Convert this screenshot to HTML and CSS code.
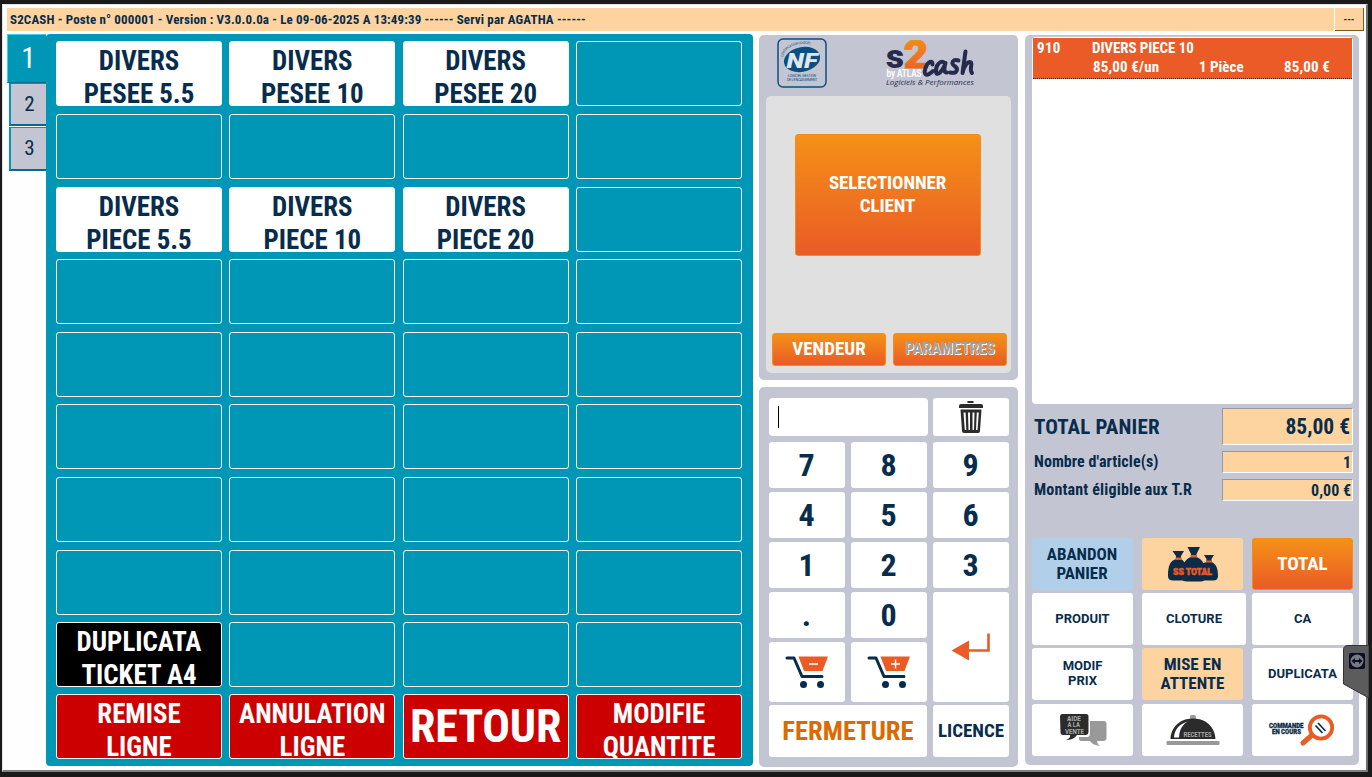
FILE: index.html
```
<!DOCTYPE html>
<html lang="fr">
<head>
<meta charset="utf-8">
<title>S2CASH</title>
<link rel="stylesheet" href="styles.css">
</head>
<body>
<div class="window">
  <header class="titlebar">
    <div class="title">S2CASH - Poste n° 000001 - Version : V3.0.0.0a - Le 09-06-2025 A 13:49:39 ------ Servi par AGATHA ------</div>
    <button class="mini">---</button>
  </header>
  <main class="main">
    <nav class="tabs">
      <div class="tab active">1</div>
      <div class="tab">2</div>
      <div class="tab">3</div>
    </nav>
    <section class="board">
      <div class="cell white">DIVERS<br>PESEE 5.5</div><div class="cell white">DIVERS<br>PESEE 10</div><div class="cell white">DIVERS<br>PESEE 20</div><div class="cell"></div>
      <div class="cell"></div><div class="cell"></div><div class="cell"></div><div class="cell"></div>
      <div class="cell white">DIVERS<br>PIECE 5.5</div><div class="cell white">DIVERS<br>PIECE 10</div><div class="cell white">DIVERS<br>PIECE 20</div><div class="cell"></div>
      <div class="cell"></div><div class="cell"></div><div class="cell"></div><div class="cell"></div>
      <div class="cell"></div><div class="cell"></div><div class="cell"></div><div class="cell"></div>
      <div class="cell"></div><div class="cell"></div><div class="cell"></div><div class="cell"></div>
      <div class="cell"></div><div class="cell"></div><div class="cell"></div><div class="cell"></div>
      <div class="cell"></div><div class="cell"></div><div class="cell"></div><div class="cell"></div>
      <div class="cell black">DUPLICATA<br>TICKET A4</div><div class="cell"></div><div class="cell"></div><div class="cell"></div>
      <div class="cell red">REMISE<br>LIGNE</div><div class="cell red">ANNULATION<br>LIGNE</div><div class="cell red big">RETOUR</div><div class="cell red">MODIFIE<br>QUANTITE</div>
    </section>
    <div class="middle">
      <section class="client-panel">
        <div class="logos">
          <svg class="nf" viewBox="0 0 50 50" width="50" height="50">
            <rect x="1" y="1" width="48" height="48" rx="5" fill="none" stroke="#0b4f80" stroke-width="1.5"/>
            <ellipse cx="25" cy="21.500" rx="18.300" ry="12.300" fill="#0b4f80" transform="rotate(-12 25 21.500)"/>
            <text x="9.500" y="30" class="nf-text" textLength="31" lengthAdjust="spacingAndGlyphs">NF</text>
            <path id="arc" d="M6 19C8 8 24 3 38 7.500" fill="none"/>
            <text class="nf-tiny"><textPath href="#arc" textLength="34">CERTIFICATION LOGICIEL</textPath></text>
            <text x="11" y="39" class="nf-tiny" textLength="28">LOGICIEL GESTION</text>
            <text x="10" y="43" class="nf-tiny" textLength="30">DE L'ENCAISSEMENT</text>
          </svg>
          <svg class="brand" viewBox="0 0 92 50" width="92" height="50">
            <defs><linearGradient id="two" x1="0" y1="0" x2="0" y2="1"><stop offset="0" stop-color="#f49518"/><stop offset="1" stop-color="#ea5a26"/></linearGradient></defs>
            <text x="1" y="27.500" class="b-s" textLength="18" lengthAdjust="spacingAndGlyphs">s</text>
            <text x="18.500" y="27.500" class="b-2" textLength="25" lengthAdjust="spacingAndGlyphs" fill="url(#two)">2</text>
            <text x="1.500" y="37" class="b-by" textLength="35" lengthAdjust="spacingAndGlyphs">by ATLAS</text>
            <g fill="none" stroke="#262a4c" stroke-width="4" stroke-linecap="round" stroke-linejoin="round">
              <path d="M47.500 24.500C48 20 43 21 40.500 28C38 36 42 36.500 48 31"/>
              <path d="M60 23C55 19 50.500 26 51 32C52 37 58 31 60.500 23C58.500 29 59 33 62 32.500"/>
              <path d="M73.500 20.500C68 19 65 23 69.500 26C74 29 72 34 65 32.500"/>
              <path d="M80.500 11.500L77.500 33C79 26 83 20.500 86 22.500C87.500 25 84 29 87 33"/>
            </g>
            <text x="1" y="44.500" class="b-tag" textLength="88" lengthAdjust="spacingAndGlyphs">Logiciels &amp; Performances</text>
          </svg>
        </div>
        <div class="client-box">
          <button class="orange select">SELECTIONNER<br>CLIENT</button>
          <div class="pair">
            <button class="orange">VENDEUR</button>
            <button class="orange off">PARAMETRES</button>
          </div>
        </div>
      </section>
      <section class="keypad">
        <div class="input"><span class="caret"></span></div>
        <button class="key bin"><svg width="26" height="34" viewBox="0 0 26 34" fill="#2b2b2b"><rect x="9.500" y="1" width="6" height="2"/><path d="M1 6Q1 4 3 4H23Q25 4 25 6V8H1Z"/><path fill-rule="evenodd" d="M2.500 9.500H23.500L22 31Q22 33 20 33H6Q4 33 4 31ZM5.500 12.500L6.800 30H8.300L7.600 12.500ZM10 12.500L10.500 30H12V12.500ZM14.500 12.500V30H16L16.500 12.500ZM18.800 12.500L18 30H19.500L20.800 12.500Z"/></svg></button>
        <button class="key">7</button><button class="key">8</button><button class="key">9</button>
        <button class="key">4</button><button class="key">5</button><button class="key">6</button>
        <button class="key">1</button><button class="key">2</button><button class="key">3</button>
        <button class="key">.</button><button class="key">0</button>
        <button class="key enter"><svg width="40" height="30" viewBox="0 0 40 30"><path d="M17 18.500H37.500V1.500" fill="none" stroke="#ea5b26" stroke-width="2.600"/><path d="M0.500 18.500L18 8.500V28.500Z" fill="#ea5b26"/></svg></button>
        <button class="key cart"><svg width="44" height="34" viewBox="0 0 44 34"><path d="M2 3H9L17 21.500H37" fill="none" stroke="#082c4b" stroke-width="3" stroke-linecap="round" stroke-linejoin="round"/><path d="M13.500 1.500H43L37.500 16H19Z" fill="#ea5b26"/><circle cx="18.500" cy="29.500" r="3.500" fill="#082c4b"/><circle cx="35.500" cy="29.500" r="3.500" fill="#082c4b"/><path d="M24 9H33" stroke="#fff" stroke-width="1.500"/></svg></button>
        <button class="key cart"><svg width="44" height="34" viewBox="0 0 44 34"><path d="M2 3H9L17 21.500H37" fill="none" stroke="#082c4b" stroke-width="3" stroke-linecap="round" stroke-linejoin="round"/><path d="M13.500 1.500H43L37.500 16H19Z" fill="#ea5b26"/><circle cx="18.500" cy="29.500" r="3.500" fill="#082c4b"/><circle cx="35.500" cy="29.500" r="3.500" fill="#082c4b"/><path d="M24 9H33M28.500 4.500V13.500" stroke="#fff" stroke-width="1.500"/></svg></button>
        <button class="key close">FERMETURE</button>
        <button class="key licence">LICENCE</button>
      </section>
    </div>
    <section class="ticket">
      <div class="list">
        <div class="line">
          <div class="l1"><span class="code">910</span><span>DIVERS PIECE 10</span></div>
          <div class="l2"><span class="unit">85,00 €/un</span><span class="qty">1 Pièce</span><span class="amount">85,00 €</span></div>
        </div>
      </div>
      <div class="totals">
        <span class="tl grand">TOTAL PANIER</span><span class="field grand">85,00 €</span>
        <span class="tl">Nombre d'article(s)</span><span class="field">1</span>
        <span class="tl tr">Montant éligible aux T.R</span><span class="field">0,00 €</span>
      </div>
      <div class="actions">
        <button class="act blue">ABANDON<br>PANIER</button>
        <button class="act peach"><svg width="52" height="36" viewBox="0 0 52 36">
          <path d="M5.500 5H17L14 10V13C20 16 20 26 19 34.500H6Q1 34.500 1 30C1 20 3 15 9 13V10ZM37 9H47L44.500 13V16C50 18 51 24 51 30Q51 34.500 46 34.500H34V18L39.500 16V13Z" fill="#0c2b49"/>
          <path d="M20.500 1H33L29.500 8V11C35 13 38 18 38 24V33Q37 35.500 34 35.500H20Q16 35.500 15 33V22C16 17 19 13 24 11V8Z" fill="#0c2b49"/>
          <path d="M23.500 9H30V11.500H23.500ZM8.500 11.500H14.500V14H8.500ZM39 14.500H45V16.500H39Z" fill="#ea5b26"/>
          <text x="6" y="29" class="ss" textLength="39" lengthAdjust="spacingAndGlyphs">SS TOTAL</text></svg></button>
        <button class="act orange total">TOTAL</button>
        <button class="act small">PRODUIT</button>
        <button class="act small wide">CLOTURE</button>
        <button class="act small">CA</button>
        <button class="act small">MODIF<br>PRIX</button>
        <button class="act peach">MISE EN<br>ATTENTE</button>
        <button class="act small">DUPLICATA</button>
        <button class="act"><svg width="48" height="34" viewBox="0 0 48 34">
          <path d="M31 8H45Q47.500 8 47.500 11V25Q47.500 28 44 28H38Q38 31 41 33Q33 32 31 28H22Q20 28 20 26V24H29Q31 23 31 20Z" fill="#999"/>
          <path d="M3 1H27Q29.500 1 29.500 3.500V19Q29.500 21.500 27 22H18Q15 27 7 27Q12 25 11 22H4Q1.500 22 1.500 19L1 3.500Q1 1 3 1Z" fill="#2b2b2b"/>
          <text class="aide" x="8" y="8" textLength="14" lengthAdjust="spacingAndGlyphs">AIDE</text><text class="aide" x="8.500" y="14" textLength="12.500" lengthAdjust="spacingAndGlyphs">À LA</text><text class="aide" x="6" y="20.500" textLength="19" lengthAdjust="spacingAndGlyphs">VENTE</text></svg></button>
        <button class="act"><svg width="54" height="32" viewBox="0 0 54 32">
          <rect x="24" y="1" width="6" height="4" rx="2" fill="#999"/><rect x="0.500" y="27" width="53" height="4" rx="1" fill="#999"/>
          <path fill-rule="evenodd" d="M4.500 25C5 13 14 4.500 27 4.500S49 13 49.500 25ZM8 23.500H13C13.500 15 17 10 22 7.500C14 9.500 8.500 15 8 23.500Z" fill="#2b2b2b"/>
          <text class="aide" x="17.500" y="23" textLength="28" lengthAdjust="spacingAndGlyphs">RECETTES</text></svg></button>
        <button class="act"><svg class="lens" width="68" height="34" viewBox="0 0 68 34">
          <path d="M43 23L35 30" stroke="#ea5b26" stroke-width="5" stroke-linecap="round"/><circle cx="53" cy="14.500" r="11.200" fill="none" stroke="#ea5b26" stroke-width="3.800"/>
          <path d="M50 10L57.500 18M47.500 12.500L54.500 20" stroke="#0c2b49" stroke-width="1.700"/>
          <text class="cmd" x="1" y="15" textLength="34.500" lengthAdjust="spacingAndGlyphs">COMMANDE</text><text class="cmd" x="4" y="21" textLength="29" lengthAdjust="spacingAndGlyphs">EN COURS</text></svg></button>
      </div>
    </section>
  </main>
</div>
<svg class="remote" width="26" height="54" viewBox="0 0 26 54"><path d="M0.500 5Q0.500 0.500 5 0.500H26V53L0.500 39Z" fill="#5c5c5c" stroke="#333"/><rect x="6" y="8" width="16" height="16" rx="2" fill="#0b0c2a"/><circle cx="14" cy="16" r="6.500" fill="#777b80"/><path d="M8.500 16L12 13V15H16V13L19.500 16L16 19V17H12V19Z" fill="#0b0c2a"/></svg>
</body>
</html>
```
FILE: styles.css
```
* { box-sizing: border-box; }
body {
  margin: 0; width: 1372px; height: 777px; overflow: hidden; position: relative;
  background: #1a1a1a; color: #082c4b; padding: 4px 4px 5px 2px;
  font-family: "Roboto Condensed", Roboto, sans-serif; font-stretch: 75%; font-weight: 700;
}
button { border: 0; padding: 0; margin: 0; font: inherit; color: inherit; font-stretch: inherit; }
svg { display: block; }
.window {
  height: 768px; background: #fefefe; padding: 2px 2px 0 4px;
  border: 1px solid #e3e3e3; border-right: 2px solid #6e6e6e; border-bottom: 2px solid #808080;
}
.titlebar { display: flex; gap: 1px; height: 24px; padding-top: 1px; }
.title { width: 1327px; height: 23px; background: #fdd4a0; font-size: 13px; line-height: 23px; padding-left: 3px; letter-spacing: .145px; white-space: pre; }
.mini { width: 29px; background: #fdd4a0; border-right: 1px solid #80571c; border-bottom: 1px solid #80571c; font-size: 10px; }
.main { display: flex; padding-top: 3px; }
.tabs { width: 39px; display: flex; flex-direction: column; align-items: flex-end; font-weight: 400; }
.tab { width: 37px; height: 43px; margin-bottom: 1px; background: #c3c5d2; border: 1px solid #0097b7; border-left: 2px solid #0097b7; border-bottom: 2px solid #056a8c; border-right: 0; font-size: 21px; line-height: 41px; padding-left: 2px; text-align: center; }
.tab:last-child { height: 44px; }
.tab.active { width: 39px; height: 49px; margin: 0; background: #0097b7; color: #fff; font-size: 29px; line-height: 46px; padding-left: 3px; border-top-color: #3ad0ea; border-left: 1px solid #3ad0ea; border-bottom: 1px solid #056a8c; }
.board {
  width: 707px; height: 732px; background: #0097b7; border-radius: 4px; padding: 7px 11px 7px 10px;
  display: grid; grid-template-columns: repeat(4, 166px); grid-template-rows: 73px 73px 72px 73px 72px 73px 73px 72px 72px 65px;
  justify-content: space-between;
}
.cell { height: 65px; border: 1px solid #fff; border-radius: 3px; overflow: hidden; text-align: center; font-size: 26.900px; line-height: 33px; padding-top: 3px; white-space: nowrap; }
.white { background: #fff; }
.black { background: #000; color: #fff; }
.red { background: #cc0000; color: #fff; }
.cell.big { font-size: 46px; line-height: 57px; letter-spacing: -.2px; }
.middle { width: 259px; margin: 1px 7px 0 6px; display: flex; flex-direction: column; gap: 7px; }
.client-panel { height: 345px; background: #c3c5d2; border-radius: 5px; padding: 0 7px; }
.logos { height: 61px; display: flex; padding: 3px 0 0 11px; }
.brand { margin: 2px 0 0 58px; }
.nf-text { font: italic 900 21px Roboto, sans-serif; fill: #dfe6ee; }
.nf-tiny { font: 400 3.5px Roboto, sans-serif; fill: #0b4f80; }
.b-s { font: 900 33px Roboto, sans-serif; fill: #262a4c; }
.b-2 { font: 900 38px Roboto, sans-serif; stroke: url(#two); stroke-width: .8; }
.b-by { font: 700 10px Roboto, sans-serif; fill: #fff; }
.b-tag { font: italic 400 7.500px "Open Sans", sans-serif; fill: #262a4c; }
.client-box { height: 277px; background: #e0e0e0; border-radius: 5px; padding: 38px 4px 7px 6px; display: flex; flex-direction: column; justify-content: space-between; align-items: center; }
.orange { color: #fff; background: linear-gradient(#f49117, #ea5b26); border: 1px solid #f28c1a; border-radius: 3px; }
.select { width: 186px; height: 122px; margin-right: 3px; font-size: 19px; line-height: 23px; letter-spacing: -.12px; padding: 0 1px 2px 0; }
.pair { display: flex; gap: 7px; }
.pair .orange { width: 114px; height: 33px; font-size: 19px; padding-bottom: 2px; }
.pair .off { font-size: 16px; color: #a0a0a0; text-shadow: 1px 1px 0 #fff; }
.keypad { height: 380px; background: #c3c5d2; border-radius: 5px; padding: 11px 9px 0 10px; display: grid; grid-template-columns: repeat(3, 76px); grid-template-rows: 40px 46px 46px 46px 46px 60px 51px; gap: 4px 6px; align-content: start; }
.input { grid-column: span 2; width: 159px; height: 38px; background: #fff; border-radius: 4px; padding: 8px 9px; }
.caret { display: block; width: 1px; height: 22px; background: #000; }
.key { background: #fff; border-radius: 3px; font-size: 32px; display: flex; align-items: center; justify-content: center; padding-right: 1px; }
.bin { height: 38px; padding: 0; }
.enter { grid-row: span 2; }
.cart { padding: 0; }
.close, .licence { margin-top: -1px; height: 52px; }
.close { grid-column: span 2; color: #db6b00; font-size: 26.600px; padding: 0 0 2px; }
.licence { font-size: 19px; padding: 0 0 2px; }
.ticket { width: 334px; height: 730px; margin-top: 1px; background: #c3c5d2; border-radius: 5px; padding: 2px 6px 0 7px; }
.list { height: 367px; background: #fff; border-radius: 4px; padding: 1px; }
.line { height: 41px; background: #ea5b28; border-bottom: 1px dotted #222; color: #fff; font-size: 15px; line-height: 19px; padding-top: 1px; }
.l1, .l2 { display: flex; height: 19px; white-space: nowrap; }
.l1 { letter-spacing: -.08px; }
.code { width: 59px; padding-left: 4px; letter-spacing: .3px; }
.unit { margin-left: 60px; width: 106px; letter-spacing: .15px; }
.qty { width: 85px; }
.amount { letter-spacing: .15px; }
.totals { display: grid; grid-template-columns: 190px 131px; grid-template-rows: 37px 22px 22px; gap: 6px 0; padding-top: 4px; align-items: center; }
.tl { padding: 0 0 2px 2px; font-size: 16px; letter-spacing: .08px; white-space: nowrap; }
.tl.tr { letter-spacing: .17px; }
.tl.grand { font-size: 21px; padding-bottom: 0; letter-spacing: .17px; }
.field { align-self: stretch; background: #fdd4a0; border: 1px solid #fff; border-top-color: #999; border-left-color: #999; text-align: right; padding-right: 1px; font-size: 16px; line-height: 21px; }
.field.grand { font-size: 21.500px; line-height: 35px; padding-right: 2px; }
.actions { padding-top: 37px; display: grid; grid-template-columns: repeat(3, 101px); grid-template-rows: 55px 55px 56px 52px; column-gap: 9px; }
.act { height: 52px; background: #fff; border-radius: 3px; font-size: 17px; line-height: 19px; display: flex; align-items: center; justify-content: center; text-align: center; padding: 0 0 1px; }
.blue { background: #b1cfe9; padding-right: 1px; }
.peach { background: #fdd4a0; }
.act.orange { background: linear-gradient(#f49117, #ea5b26); }
.total { font-size: 19px; padding-bottom: 2px; }
.small { font-family: Roboto, sans-serif; font-stretch: 100%; font-size: 13px; line-height: 15px; padding-bottom: 2px; }
.wide { width: 104px; }
.ss { font: 900 9px Roboto, sans-serif; fill: #ea5b26; stroke: #ea5b26; stroke-width: .5; }
.aide { font: 700 7px Roboto, sans-serif; fill: #ababab; }
.cmd { font: 900 7px Roboto, sans-serif; fill: #0c2b49; stroke: #0c2b49; stroke-width: .3; }
.lens { margin-right: 1px; }
.remote { position: absolute; left: 1343px; top: 645px; }
```
